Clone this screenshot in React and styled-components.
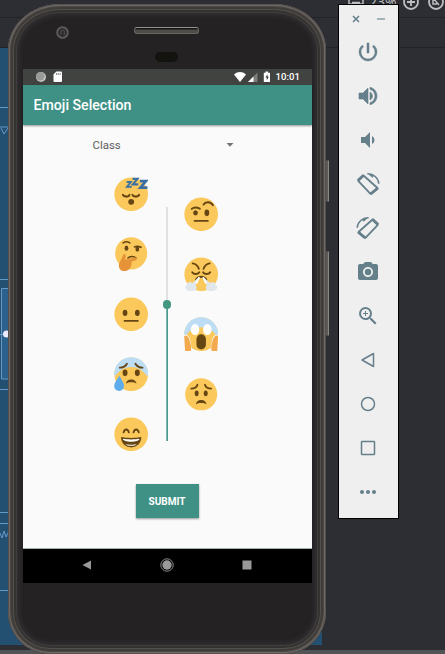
import React from 'react';
import styled, { createGlobalStyle } from 'styled-components';
import { MdPowerSettingsNew, MdVolumeUp, MdVolumeDown, MdPhotoCamera, MdZoomIn } from 'react-icons/md';

const GlobalStyle = createGlobalStyle`
  * { box-sizing: border-box; }
  body { margin: 0; overflow: hidden; background: #2d2e33; font-family: Roboto, sans-serif; }
  svg { display: block; flex: none; }
`;

const Desktop = styled.main`
  position: relative;
  width: 445px;
  height: 654px;
  overflow: hidden;
  background: #2d2e33;
`;

/* ---- editor behind the emulator ---- */
const Editor = styled.div`
  display: flex;
  flex-direction: column;
  height: 654px;
`;
const ZoomBar = styled.div`
  display: flex;
  justify-content: flex-end;
  height: 18px;
  border-bottom: 1px solid #222327;
`;
const ZoomTools = styled.div`
  display: flex;
  align-items: flex-start;
  width: 98px;
  height: 17px;
  color: #bdbec0;
`;
const ZoomLabel = styled.span`
  width: 34px;
  margin: -6px 0 0 4px;
  font: 14px/16px 'Open Sans', sans-serif;
`;
const EditorRuler = styled.div`
  height: 30px;
  border-bottom: 1px solid #222327;
`;
const Blueprint = styled.div`
  width: 322px;
  height: 597px;
  background: #234f70;
`;
const EditorFooter = styled.div`
  margin-top: auto;
  height: 4px;
  background: #535456;
`;

/* ---- phone ---- */
const Phone = styled.section`
  position: absolute;
  left: 8px;
  top: 4px;
  width: 318px;
  height: 650px;
  display: flex;
  flex-direction: column;
  align-items: center;
  border-radius: 52px 52px 42px 42px / 46px 46px 42px 42px;
  background: #252224;
  box-shadow:
    inset 0 0 0 1px #56514e,
    inset 0 0 0 2px #6d6966,
    inset 0 0 0 3px #4b4744,
    inset 0 0 0 5px #403c39,
    inset 0 0 0 6px #52504c,
    inset 0 0 0 8px #353331,
    inset 0 0 0 9px #403e3d,
    inset 0 0 5px 11px #343234;
`;
const SideButton = styled.div`
  position: absolute;
  left: 318px;
  top: ${(p) => p.$top}px;
  width: 3px;
  height: ${(p) => p.$height}px;
  border: 1px solid #4a4947;
  border-left: 0;
  border-right-color: #898883;
  background: #5d5b57;
  border-radius: 0 1px 1px 0;
`;
const Forehead = styled.div`
  width: 289px;
  height: 65px;
  flex: none;
  display: grid;
  grid-template-columns: 111px 65px 1fr;
  grid-template-rows: 23px 25px 17px;
`;
const Camera = styled.div`
  grid-column: 1;
  grid-row: 1 / 3;
  margin: 22px 0 0 33px;
  width: 13px;
  height: 13px;
`;
const Speaker = styled.div`
  grid-column: 2;
  grid-row: 2;
  height: 7px;
  border: 1px solid #686663;
  border-top-color: #94918e;
  border-radius: 3px;
  background: linear-gradient(#161513 1px, #4e4c47 2px);
`;
const Sensor = styled.div`
  grid-column: 2;
  grid-row: 3;
  justify-self: center;
  width: 23px;
  height: 10px;
  border-radius: 5px;
  background: #13130f;
`;
const Screen = styled.div`
  width: 289px;
  height: 514px;
  flex: none;
  display: flex;
  flex-direction: column;
  background: #fafafa;
`;
const StatusBar = styled.div`
  height: 16px;
  flex: none;
  padding: 0 12px 0 13px;
  display: flex;
  align-items: center;
  background: #404340;
  color: #fff;
`;
const Clock = styled.span`
  width: 24px;
  margin-left: 5px;
  font: 500 9.6px/16px Roboto, sans-serif;
  white-space: nowrap;
`;
const Spacer = styled.div`
  flex: 1;
`;
const AppBar = styled.header`
  height: 40px;
  flex: none;
  padding-left: 11px;
  display: flex;
  align-items: center;
  background: #3f9186;
  box-shadow: 0 1px 2px rgba(0, 0, 0, 0.42);
`;
const Title = styled.h1`
  margin: 0;
  color: #fff;
  font: 500 14.15px/20px Roboto, sans-serif;
`;
const Content = styled.div`
  flex: 1;
  display: flex;
  flex-direction: column;
  align-items: center;
  border-bottom: 1px solid #a4b1ae;
`;
const ClassSelect = styled.div`
  align-self: flex-start;
  display: flex;
  align-items: center;
  justify-content: space-between;
  width: 141px;
  height: 20px;
  margin: 10px 0 0 70px;
  color: #5d5d5d;
  font: 11.4px/20px Roboto, sans-serif;
`;
const MoodPicker = styled.div`
  display: grid;
  grid-template-columns: 34px 36px 34px;
  height: 274px;
  margin: 22px 0 0 -2px;
`;
const EmojiColumn = styled.div`
  display: flex;
  flex-direction: column;
  gap: 26px;
  padding-top: ${(p) => (p.$offset ? 20 : 0)}px;
`;
const Slider = styled.div`
  display: flex;
  flex-direction: column;
  align-items: center;
  padding: 30px 0 0 2px;
`;
const Rail = styled.div`
  width: 2px;
  height: ${(p) => (p.$active ? 132 : 93)}px;
  background: ${(p) => (p.$active ? '#7bb7ae' : '#e0e0e0')};
  border-right: ${(p) => (p.$active ? '1px solid #4d998c' : '0')};
`;
const Thumb = styled.div`
  width: 8.6px;
  height: 8.6px;
  border-radius: 50%;
  background: #439680;
`;
const SubmitButton = styled.button`
  width: 63px;
  height: 34px;
  margin: 33px 0 0 0;
  padding: 1px 0 0;
  border: 0;
  background: #3f9186;
  color: #fff;
  font: 700 10px/20px Roboto, sans-serif;
  box-shadow: 0 1px 2px rgba(0, 0, 0, 0.4);
`;
const NavBar = styled.nav`
  height: 34px;
  flex: none;
  display: flex;
  align-items: center;
  justify-content: space-between;
  padding: 0 60px 2px 59px;
  background: #000;
`;

/* ---- emulator controls ---- */
const ControlPanel = styled.aside`
  position: absolute;
  left: 338px;
  top: 4px;
  width: 61px;
  height: 515px;
  padding-right: 1px;
  border: 1px solid #000;
  background: #efefef;
  color: #657f8b;
  display: flex;
  flex-direction: column;
  align-items: center;
`;
const WindowButtons = styled.div`
  display: flex;
  align-items: center;
  justify-content: space-between;
  width: 33px;
  height: 25px;
  padding-top: 3px;
`;
const ControlSlot = styled.div`
  width: 44px;
  height: 44px;
  display: flex;
  align-items: center;
  justify-content: center;
`;
const BoldPower = styled(MdPowerSettingsNew)`
  path:not([fill='none']) {
    stroke: currentColor;
    stroke-width: 0.5px;
  }
`;
const BoldVolume = styled(MdVolumeUp)`
  path:not([fill='none']) {
    stroke: currentColor;
    stroke-width: 0.6px;
  }
`;

const FACE = '#fac85b';
const INK = '#664613';

function Emoji({ kind }) {
  const line = { fill: 'none', stroke: INK, strokeWidth: 2, strokeLinecap: 'round', strokeLinejoin: 'round' };
  const face = <circle cx="18" cy="18" r="17.8" fill={FACE} />;
  const drawings = {
    sleeping: (
      <>
        {face}
        <path d="M9.2 18.5c1.5 2.8 6 2.8 7 0M19.2 18.5c1.5 2.8 6 2.8 7 0" {...line} />
        <path d="M9 19.5l7 .8M20 20.3l7-.8" {...line} strokeWidth="1" />
        <circle cx="18" cy="26" r="3.1" fill={INK} />
        <g fill="none" stroke="#3b6fa5" strokeWidth="2">
          <path d="M13.2 5h4.5L13.5 10.2h5" />
          <path d="M19.5 1.7h5.2L19.7 7.500h5.800" strokeWidth="2.2" />
          <path d="M27.2 4h6.500l-6 7h7.500" strokeWidth="2.8" />
        </g>
      </>
    ),
    thinking: (
      <>
        <circle cx="18" cy="17" r="17" fill={FACE} />
        <ellipse cx="13" cy="11.5" rx="2" ry="2.8" fill={INK} />
        <ellipse cx="24.5" cy="12.5" rx="2" ry="2.8" fill={INK} />
        <path d="M9.5 6c2-1.600 5-1.400 7 0M21.500 10.300c2-1 4.500-.8 7 .2M14.500 22c2-2 6-2.400 8.500-.2" {...line} strokeWidth="1.6" />
        <path d="M9.5 19c0-2 2.800-1.600 2.700.5l-.3 4.200 10-2.300c2.600-.5 3 2.100.8 2.800l-4.500 1.800c1 3-1.200 9-6.200 9.900C7 36.500 4 33 5.200 28z" fill="#e69239" />
      </>
    ),
    neutral: (
      <>
        {face}
        <ellipse cx="11.5" cy="16.5" rx="2.5" ry="3.4" fill={INK} />
        <ellipse cx="24.5" cy="16.5" rx="2.5" ry="3.4" fill={INK} />
        <path d="M11 25h14" {...line} />
      </>
    ),
    anxious: (
      <>
        {face}
        <path d="M0 18a18 18 0 0 1 36 0l-1 2C26 7 10 7 1 20z" fill="#bdddf4" />
        <path d="M6 11c3 0 6-1.600 7.500-4.200M30 11c-3 0-6-1.600-7.500-4.200" {...line} />
        <ellipse cx="11.5" cy="16.5" rx="2.6" ry="3.5" fill={INK} />
        <ellipse cx="24.5" cy="16.5" rx="2.6" ry="3.5" fill={INK} />
        <path d="M12.5 28c.2-6 10.800-6 11 0-2-2-9-2-11 0z" fill={INK} />
        <path d="M5.500 19.500C3.500 23 0 27 0 30.500a5.200 5.200 0 0 0 10.400 0c0-3.500-3-7.500-4.900-11z" fill="#5dadec" />
      </>
    ),
    grinning: (
      <>
        {face}
        <path d="M10 16c1-4 4.500-4 5.500 0M20.500 16c1-4 4.500-4 5.500 0" {...line} />
        <path d="M7.300 21c0 14.500 21.400 14.500 21.400 0-5.500 1.200-15.900 1.200-21.400 0z" fill={INK} />
        <path d="M9.200 22.800c4 .8 13.600.8 17.600 0 0 4.200-17.600 4.200-17.600 0zM12 28.500c3 .6 9 .6 12 0-2 2.300-10 2.300-12 0z" fill="#fff" />
      </>
    ),
    skeptical: (
      <>
        {face}
        <ellipse cx="12" cy="16.5" rx="2.5" ry="2.7" fill={INK} />
        <ellipse cx="24" cy="16.5" rx="2.5" ry="3.5" fill={INK} />
        <path d="M8 12.300c2-1.700 5.500-1.700 8.500-.2M20.500 7.700c2-3.500 7.500-3.400 10 .7M11 25h14" {...line} />
      </>
    ),
    huffing: (
      <>
        {face}
        <path d="M9 6.500c3.500.5 5.500 2.500 6.500 5.700M27 6.500c-3.500.5-5.500 2.500-6.500 5.700M8.500 15.800c1.500 2.500 6 2.500 7.500 0M20 15.800c1.500 2.500 6 2.500 7.500 0M12.500 24c2-4.500 9-4.500 11 0" {...line} />
        <path d="M15.800 20.500L12 29c2 3 1 7-2 6.500-2.500 1-6 1-7.500-1.500-2-.5-2-4 .5-5 0-3 4-4 5.500-1.500zM20.200 20.500L24 29c-2 3-1 7 2 6.500 2.500 1 6 1 7.500-1.500 2-.5 2-4-.5-5 0-3-4-4-5.500-1.500z" fill="#e1e8ed" />
        <path d="M16 21l-3.200 7M20 21l3.200 7" fill="none" stroke="#fff" strokeWidth="1.8" />
      </>
    ),
    screaming: (
      <>
        {face}
        <path d="M0 18a18 18 0 0 1 36 0l-1 3C28 7 8 7 1 21z" fill="#bdddf4" />
        <ellipse cx="11.5" cy="13" rx="4.5" ry="5.8" fill="#fff" />
        <ellipse cx="24.5" cy="13" rx="4.5" ry="5.8" fill="#fff" />
        <rect x="13" y="18" width="10" height="16" rx="5" fill={INK} />
        <path d="M0 18.500c3-1 6 2.500 6.500 6L8.500 36H1zM36 18.500c-3-1-6 2.500-6.500 6L27.500 36H35z" fill="#fafafa" />
        <path d="M0 20c2.500-2 5 1 5.800 4.500C6.500 28 8 30 7 36H1zM36 20c-2.500-2-5 1-5.800 4.500C29.500 28 28 30 29 36h6z" fill="#f3aa4f" />
      </>
    ),
    worried: (
      <>
        <circle cx="18" cy="18" r="17" fill={FACE} />
        <ellipse cx="13.2" cy="17" rx="2.1" ry="3" fill={INK} />
        <ellipse cx="22.8" cy="17" rx="2.1" ry="3" fill={INK} />
        <path d="M7.500 12c3 0 5.500-1.500 6.500-4M28.500 12c-3 0-5.500-1.500-6.500-4" {...line} />
        <path d="M12.500 28.500c.3-6 10.700-6 11 0-2.500-1.800-8.500-1.800-11 0z" fill={INK} />
      </>
    ),
  };
  return (
    <svg width="34" height="34" viewBox="-.2 -.3 36 36" role="img" aria-label={kind}>
      {drawings[kind]}
    </svg>
  );
}

function RotateIcon({ right }) {
  return (
    <svg width="24" height="24" viewBox="0 0 24 24" fill="none" stroke="currentColor">
      <g transform={right ? 'translate(24 0) scale(-1 1)' : undefined}>
        <path d="M7.500 3.500L2.200 8.800 14.500 21.800 21.500 16z" strokeWidth="1.8" strokeLinejoin="round" />
        <path d="M7.600 3.200L1.900 8.600M22 16l-7.200 6" strokeWidth="2.8" />
        <path d="M11.300 1.800C17.500 1.400 22.500 6 22.800 11.800M12.500 1.500l4.500 3.700" strokeWidth="1.5" />
      </g>
    </svg>
  );
}

const OutlineIcon = ({ children }) => (
  <svg width="24" height="24" viewBox="0 0 24 24" fill="none" stroke="currentColor" strokeWidth="1.5" strokeLinejoin="round">
    {children}
  </svg>
);

const controls = [
  ['power', <BoldPower size={24} />],
  ['volume-up', <BoldVolume size={24} />],
  ['volume-down', <MdVolumeDown size={24} />],
  ['rotate-left', <RotateIcon />],
  ['rotate-right', <RotateIcon right />],
  ['camera', <MdPhotoCamera size={24} />],
  ['zoom', <MdZoomIn size={24} />],
  ['back', <OutlineIcon><path d="M17.5 5.500v13L6 12z" /></OutlineIcon>],
  ['home', <OutlineIcon><circle cx="12" cy="12" r="6.5" /></OutlineIcon>],
  ['overview', <OutlineIcon><rect x="5.5" y="5.5" width="13" height="13" rx="0.5" /></OutlineIcon>],
  ['more', <OutlineIcon><g fill="currentColor" stroke="none"><circle cx="6" cy="12" r="2" /><circle cx="12" cy="12" r="2" /><circle cx="18" cy="12" r="2" /></g></OutlineIcon>],
];

export default function App() {
  return (
    <Desktop>
      <GlobalStyle />
      <Editor>
        <ZoomBar>
          <ZoomTools>
            <svg width="18" height="17" viewBox="0 0 18 17" fill="none" stroke="currentColor" strokeWidth="1.5">
              <path d="M2 0v4h14V0M5 2.500h8" />
            </svg>
            <ZoomLabel>23%</ZoomLabel>
            <svg width="42" height="17" viewBox="-1 0 42 17" fill="none" stroke="currentColor" strokeWidth="1.8">
              <circle cx="7" cy="2" r="7" />
              <path d="M3 2h8M7-2v8" />
              <circle cx="32" cy="2" r="7" />
              <path d="M29-2l6 7M29 0v4h4" strokeWidth="1.5" />
            </svg>
          </ZoomTools>
        </ZoomBar>
        <EditorRuler />
        <Blueprint>
          <svg width="9" height="597" viewBox="0 0 9 597" fill="none" stroke="#6499c9">
            <path d="M0 59.500h9M0 79h9M1 80l3 6 4-6M0 231.500h9M0 341.500h9M0 464.500h9M0 475.500h9M0 542.500h9M0 485l2 5 2-7 2 6 3-6" />
            <path d="M9 240.500H1.500v90.500H9" fill="#2c618b" />
            <path d="M0 286.500h3" />
            <circle cx="6.5" cy="286" r="3.5" fill="#eceaff" stroke="none" />
          </svg>
        </Blueprint>
        <EditorFooter />
      </Editor>

      <Phone>
        <SideButton $top={156} $height={42} />
        <SideButton $top={247} $height={85} />
        <Forehead>
          <Camera>
            <svg width="13" height="13" viewBox="0 0 13 13" fill="none">
              <circle cx="6.5" cy="6.5" r="5.3" stroke="#5c5b5b" strokeWidth="2" fill="#2b292a" />
              <path d="M5 9V5.500a1.700 1.700 0 0 1 3.300 0V9" stroke="#4c4b4c" strokeWidth="1.3" />
            </svg>
          </Camera>
          <Speaker />
          <Sensor />
        </Forehead>
        <Screen>
          <StatusBar>
            <svg width="28" height="16" viewBox="0 0 28 16">
              <circle cx="5" cy="8" r="5" fill="#c4c6c4" />
              <circle cx="4.3" cy="7.3" r="4.2" fill="#999b99" />
              <path d="M20.300 2.500H25a1 1 0 0 1 1 1V12a1 1 0 0 1-1 1h-6.500a1 1 0 0 1-1-1V5.500z" fill="#fff" />
              <path d="M20.500 4v2M22.300 4v2M24.100 4v2" stroke="#555" strokeWidth=".7" />
            </svg>
            <Spacer />
            <svg width="37" height="16" viewBox="0 0 37 16">
              <path d="M0 5.500c3.500-3.300 8.500-3.300 12 0l-6 7.500z" fill="#fff" />
              <path d="M14 13l9.500-9.500V13z" fill="#7c7e7c" />
              <path d="M14 13l5.500-5.500V13z" fill="#fff" />
              <path d="M31.500 2.500h2.500v1.200h2V13h-6.200V3.700h1.700z" fill="#fff" />
              <path d="M33.500 5.200l-2 3.300h1.300v2.800l2-3.600h-1.300z" fill="#333" />
            </svg>
            <Clock>10:01</Clock>
          </StatusBar>
          <AppBar><Title>Emoji Selection</Title></AppBar>
          <Content>
            <ClassSelect>
              <span>Class</span>
              <svg width="8" height="4" viewBox="0 0 8 4"><path d="M.5 0h7L4 3.700z" fill="#737373" /></svg>
            </ClassSelect>
            <MoodPicker>
              <EmojiColumn>
                {['sleeping', 'thinking', 'neutral', 'anxious', 'grinning'].map((k) => <Emoji key={k} kind={k} />)}
              </EmojiColumn>
              <Slider><Rail /><Thumb /><Rail $active /></Slider>
              <EmojiColumn $offset>
                {['skeptical', 'huffing', 'screaming', 'worried'].map((k) => <Emoji key={k} kind={k} />)}
              </EmojiColumn>
            </MoodPicker>
            <SubmitButton>SUBMIT</SubmitButton>
          </Content>
          <NavBar>
            <svg width="10" height="10" viewBox="0 0 10 10"><path d="M9 .5v9L.5 5z" fill="#999" /></svg>
            <svg width="14" height="14" viewBox="0 0 14 14">
              <circle cx="7" cy="7" r="6.2" fill="none" stroke="#8c8c8c" />
              <circle cx="7" cy="7" r="4.7" fill="#999" />
            </svg>
            <svg width="10" height="10" viewBox="0 0 10 10"><rect x=".5" y=".5" width="9" height="9" fill="#999" /></svg>
          </NavBar>
        </Screen>
      </Phone>

      <ControlPanel>
        <WindowButtons>
          <svg width="8" height="8" viewBox="0 0 8 8" stroke="currentColor" strokeWidth="1.5"><path d="M1 1l6 6M7 1L1 7" /></svg>
          <svg width="8" height="2" viewBox="0 0 8 2"><rect width="8" height="2" fill="#a3b2b9" /></svg>
        </WindowButtons>
        {controls.map(([name, icon]) => <ControlSlot key={name}>{icon}</ControlSlot>)}
      </ControlPanel>
    </Desktop>
  );
}
